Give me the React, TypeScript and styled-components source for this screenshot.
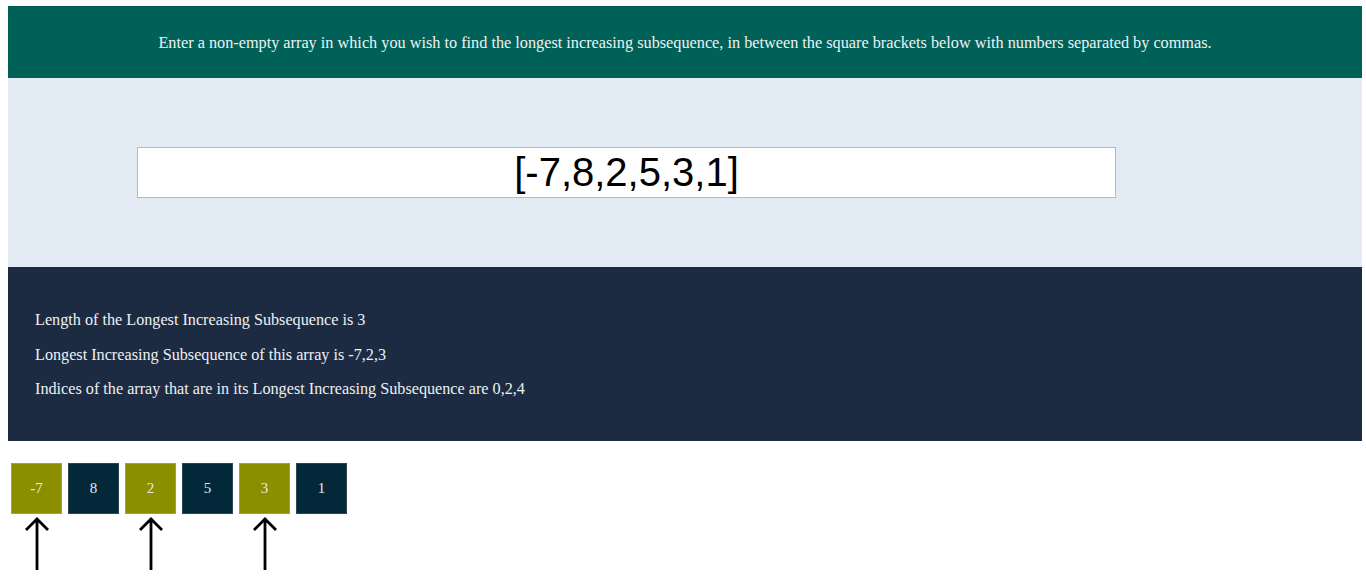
import styled, { createGlobalStyle } from "styled-components";

const input = [-7, 8, 2, 5, 3, 1];
const lisIndices = [0, 2, 4];

const GlobalStyle = createGlobalStyle`
  body {
    margin: 6px 4px 0 8px;
    background: #ffffff;
    font-family: "Liberation Serif", "Times New Roman", serif;
  }
`;

const App = () => {
  const lis = lisIndices.map((i) => input[i]);

  return (
    <Page>
      <GlobalStyle />
      <Banner>
        Enter a non-empty array in which you wish to find the longest increasing
        subsequence, in between the square brackets below with numbers separated
        by commas.
      </Banner>
      <InputSection>
        <ArrayInput type="text" defaultValue={`[${input.join(",")}]`} />
      </InputSection>
      <Results>
        <Line>Length of the Longest Increasing Subsequence is {lis.length}</Line>
        <Line>Longest Increasing Subsequence of this array is {lis.join(",")}</Line>
        <Line>
          Indices of the array that are in its Longest Increasing Subsequence are{" "}
          {lisIndices.join(",")}
        </Line>
      </Results>
      <Row>
        {input.map((n, i) => {
          const picked = lisIndices.includes(i);
          return (
            <Column key={i}>
              <Cell $picked={picked}>{n}</Cell>
              {picked && (
                <Arrow width="26" height="54" viewBox="0 0 26 54">
                  <path
                    d="M13 2 L13 54 M2 14 L13 3 L24 14"
                    fill="none"
                    stroke="#000"
                    strokeWidth="2.8"
                  />
                </Arrow>
              )}
            </Column>
          );
        })}
      </Row>
    </Page>
  );
};

export default App;

const Page = styled.div`
  display: flex;
  flex-direction: column;
`;
const Banner = styled.div`
  background: #006159;
  color: #eef2f2;
  font-size: 16.25px;
  text-align: center;
  padding: 28px 0 25px;
`;
const InputSection = styled.div`
  background: #e2eaf3;
  padding: 69px 0;
`;
const ArrayInput = styled.input`
  display: block;
  box-sizing: border-box;
  margin-left: 129px;
  width: 979px;
  height: 51px;
  border: 1px solid #b9b9b9;
  background: #fff;
  font-family: "Liberation Sans", Arial, sans-serif;
  font-size: 40px;
  text-align: center;
  color: #000;
  padding: 0;
  outline: none;
`;
const Results = styled.div`
  background: #1c2b41;
  color: #eef0f3;
  padding: 28px 27px 26px;
`;
const Line = styled.p`
  margin: 16px 0;
  font-size: 16.2px;
  line-height: 18.5px;
`;
const Row = styled.div`
  display: flex;
  gap: 6px;
  margin: 22px 0 0 3px;
`;
const Column = styled.div`
  display: flex;
  flex-direction: column;
  align-items: center;
`;
const Cell = styled.div<{ $picked: boolean }>`
  width: 51px;
  height: 51px;
  box-sizing: border-box;
  display: flex;
  align-items: center;
  justify-content: center;
  background: ${(p) => (p.$picked ? "#8a8f00" : "#03283a")};
  border: 1px solid ${(p) => (p.$picked ? "#a3a632" : "#2c4656")};
  color: #e6e9ea;
  font-size: 15px;
`;
const Arrow = styled.svg`
  display: block;
  margin-top: 2px;
`;
